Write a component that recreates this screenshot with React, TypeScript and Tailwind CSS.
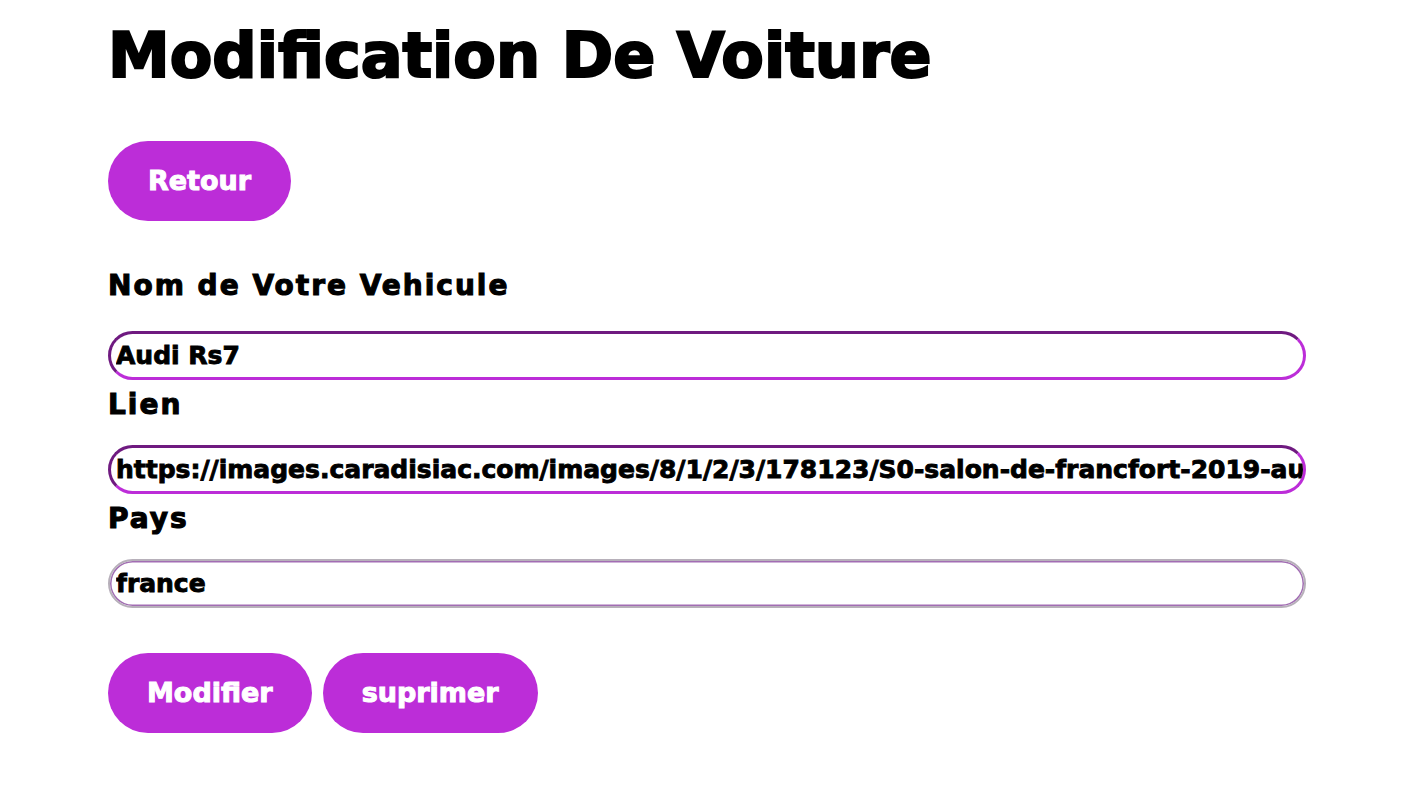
import { useState } from "react";

const font = "font-['DejaVu_Sans',sans-serif] font-bold";

const Field = ({
  label,
  value,
  labelGap,
  soft,
}: {
  label: string;
  value: string;
  labelGap: string;
  soft?: boolean;
}) => {
  const [v, setV] = useState(value);
  return (
    <div className="flex flex-col">
      <label
        className={`text-[28px] leading-none tracking-[2px] text-black [-webkit-text-stroke:1.1px_black] ${labelGap}`}
      >
        {label}
      </label>
      <input
        value={v}
        onChange={(e) => setV(e.target.value)}
        className={
          soft
            ? `h-[49px] w-full rounded-full border-2 border-[#b7b0ba] bg-white pl-[6px] text-[25px] text-black shadow-[inset_0_0_0_1.5px_#a26db3] outline-none [-webkit-text-stroke:0.9px_black] ${font}`
            : `h-[49px] w-full rounded-full border-[3px] border-t-[#6f1a80] border-l-[#6f1a80] border-b-[#bc2dd8] border-r-[#bc2dd8] bg-white pl-[5px] text-[25px] text-black outline-none [-webkit-text-stroke:0.9px_black] ${font}`
        }
      />
    </div>
  );
};

export default function App() {
  return (
    <div className={`min-h-[800px] bg-white px-[108px] pt-[25px] ${font}`}>
      <h1 className="text-[62px] leading-none text-black [-webkit-text-stroke:2.2px_black]">
        Modification De Voiture
      </h1>

      <button className="mt-[54px] h-[80px] rounded-full bg-[#bc2dd8] px-10 text-[27px] text-white [-webkit-text-stroke:1px_white]">
        Retour
      </button>

      <form className="mt-[51px] flex flex-col gap-[11px]">
        <Field label="Nom de Votre Vehicule" value="Audi Rs7" labelGap="mb-[31px]" />
        <Field
          label="Lien"
          value="https://images.caradisiac.com/images/8/1/2/3/178123/S0-salon-de-francfort-2019-audi-rs7-sportback-178123.jpg"
          labelGap="mb-[26px]"
        />
        <Field label="Pays" value="france" labelGap="mb-[26px]" soft />
      </form>

      <div className="mt-[45px] flex gap-[11px]">
        <button className="h-[80px] rounded-full bg-[#bc2dd8] px-[39px] text-[27px] text-white [-webkit-text-stroke:1px_white]">
          Modifier
        </button>
        <button className="h-[80px] rounded-full bg-[#bc2dd8] px-[39px] text-[27px] text-white [-webkit-text-stroke:1px_white]">
          suprimer
        </button>
      </div>
    </div>
  );
}
